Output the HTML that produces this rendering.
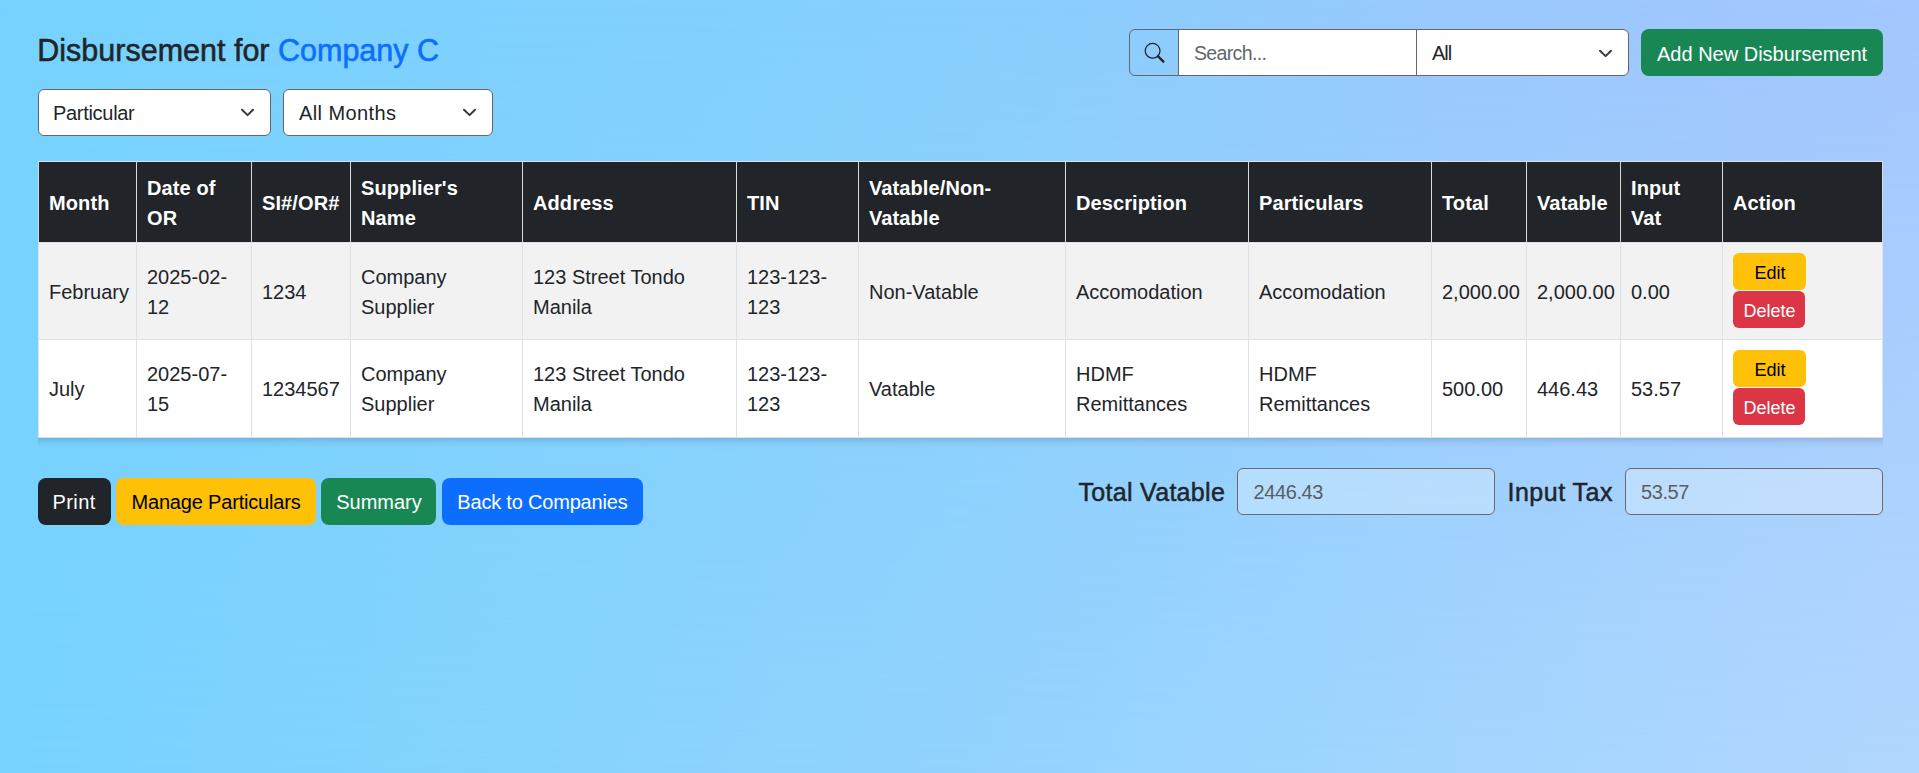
<!DOCTYPE html>
<html><head><meta charset="utf-8"><title>Disbursement</title><style>
html,body{margin:0;padding:0}
body{width:1919px;height:773px;position:relative;overflow:hidden;font-family:"Liberation Sans",sans-serif;color:#212529;
background:linear-gradient(to right,#76d3fe 0px,#87cffe 960px,#99c8fe 1450px,#a4c7fe 1919px);}
.bg2{position:absolute;left:0;top:0;width:1919px;height:773px;background:linear-gradient(to right,#77d2fe 0px,#92d3fe 960px,#b2d7fe 1919px);
-webkit-mask-image:linear-gradient(to bottom,transparent,#000);mask-image:linear-gradient(to bottom,transparent,#000)}
.t{position:absolute;white-space:nowrap}
.r{position:absolute;box-sizing:content-box}
</style></head>
<body><div class="bg2"></div>
<div class="t" style="left:37.3px;top:35.15px;font-size:30.5px;line-height:30.5px;-webkit-text-stroke:0.55px #212529;">Disbursement for <span style="color:#0d6efd;-webkit-text-stroke:0.55px #0d6efd">Company C</span></div>
<div class="r" style="left:38px;top:89px;width:231px;height:45px;background:#fff;border:1px solid #666;border-radius:6px"></div>
<div class="t" style="left:53px;top:103.1px;font-size:20px;line-height:20px;letter-spacing:-0.3px;">Particular</div>
<svg class="r" style="left:239.5px;top:107px" width="16" height="10" viewBox="0 0 16 10"><path d="M2.0 2.7 L7.6 8.1 L13.0 2.7" fill="none" stroke="#343a40" stroke-width="2" stroke-linecap="round" stroke-linejoin="round"/></svg>
<div class="r" style="left:283px;top:89px;width:208px;height:45px;background:#fff;border:1px solid #666;border-radius:6px"></div>
<div class="t" style="left:299px;top:103.1px;font-size:20px;line-height:20px;letter-spacing:0.4px;">All Months</div>
<svg class="r" style="left:461.7px;top:107px" width="16" height="10" viewBox="0 0 16 10"><path d="M2.0 2.7 L7.6 8.1 L13.0 2.7" fill="none" stroke="#343a40" stroke-width="2" stroke-linecap="round" stroke-linejoin="round"/></svg>
<div class="r" style="left:1129px;top:29px;width:498px;height:45px;border:1px solid #666;border-radius:6px;background:linear-gradient(to right,transparent 49px,#fff 49px)"></div>
<div class="r" style="left:1178px;top:30px;width:1px;height:45px;background:#666"></div>
<div class="r" style="left:1416px;top:30px;width:1px;height:45px;background:#666"></div>
<svg class="r" style="left:1142px;top:42px" width="24" height="24" viewBox="0 0 24 24"><circle cx="10.6" cy="8.8" r="7.4" fill="none" stroke="#212529" stroke-width="1.25"/><path d="M16.1 14.3 L21.4 19.6" stroke="#212529" stroke-width="2.4" stroke-linecap="round"/></svg>
<div class="t" style="left:1194px;top:44.15px;font-size:19.5px;line-height:19.5px;color:#5f666d;letter-spacing:-0.65px;">Search...</div>
<div class="t" style="left:1432px;top:42.6px;font-size:20px;line-height:20px;letter-spacing:-1px;">All</div>
<svg class="r" style="left:1597.5px;top:47.5px" width="16" height="10" viewBox="0 0 16 10"><path d="M2.0 2.7 L7.6 8.1 L13.0 2.7" fill="none" stroke="#343a40" stroke-width="2" stroke-linecap="round" stroke-linejoin="round"/></svg>
<div class="r" style="left:1641px;top:29px;width:242px;height:47px;background:#198754;border-radius:8px"></div>
<div class="t" style="left:1657px;top:43.9px;font-size:20px;line-height:20px;color:#fff;">Add New Disbursement</div>
<div class="r" style="left:38px;top:161px;width:1845px;height:277px;background:#dee2e6"></div>
<div class="r" style="left:38px;top:438px;width:1845px;height:10px;background:linear-gradient(to bottom,rgba(0,20,60,.14),rgba(0,20,60,.06) 40%,rgba(0,20,60,0))"></div>
<div class="r" style="left:38px;top:162px;width:1845px;height:80px;background:#212529"></div>
<div class="r" style="left:38px;top:242px;width:1845px;height:97px;background:#f2f2f2"></div>
<div class="r" style="left:38px;top:339px;width:1845px;height:98px;background:#fff"></div>
<div class="r" style="left:38px;top:162px;width:1px;height:80px;background:#d7dadd"></div>
<div class="r" style="left:38px;top:242px;width:1px;height:196px;background:#dee2e6"></div>
<div class="r" style="left:136px;top:162px;width:1px;height:80px;background:#d7dadd"></div>
<div class="r" style="left:136px;top:242px;width:1px;height:196px;background:#dee2e6"></div>
<div class="r" style="left:251px;top:162px;width:1px;height:80px;background:#d7dadd"></div>
<div class="r" style="left:251px;top:242px;width:1px;height:196px;background:#dee2e6"></div>
<div class="r" style="left:350px;top:162px;width:1px;height:80px;background:#d7dadd"></div>
<div class="r" style="left:350px;top:242px;width:1px;height:196px;background:#dee2e6"></div>
<div class="r" style="left:522px;top:162px;width:1px;height:80px;background:#d7dadd"></div>
<div class="r" style="left:522px;top:242px;width:1px;height:196px;background:#dee2e6"></div>
<div class="r" style="left:736px;top:162px;width:1px;height:80px;background:#d7dadd"></div>
<div class="r" style="left:736px;top:242px;width:1px;height:196px;background:#dee2e6"></div>
<div class="r" style="left:858px;top:162px;width:1px;height:80px;background:#d7dadd"></div>
<div class="r" style="left:858px;top:242px;width:1px;height:196px;background:#dee2e6"></div>
<div class="r" style="left:1065px;top:162px;width:1px;height:80px;background:#d7dadd"></div>
<div class="r" style="left:1065px;top:242px;width:1px;height:196px;background:#dee2e6"></div>
<div class="r" style="left:1248px;top:162px;width:1px;height:80px;background:#d7dadd"></div>
<div class="r" style="left:1248px;top:242px;width:1px;height:196px;background:#dee2e6"></div>
<div class="r" style="left:1431px;top:162px;width:1px;height:80px;background:#d7dadd"></div>
<div class="r" style="left:1431px;top:242px;width:1px;height:196px;background:#dee2e6"></div>
<div class="r" style="left:1526px;top:162px;width:1px;height:80px;background:#d7dadd"></div>
<div class="r" style="left:1526px;top:242px;width:1px;height:196px;background:#dee2e6"></div>
<div class="r" style="left:1620px;top:162px;width:1px;height:80px;background:#d7dadd"></div>
<div class="r" style="left:1620px;top:242px;width:1px;height:196px;background:#dee2e6"></div>
<div class="r" style="left:1722px;top:162px;width:1px;height:80px;background:#d7dadd"></div>
<div class="r" style="left:1722px;top:242px;width:1px;height:196px;background:#dee2e6"></div>
<div class="r" style="left:1882px;top:162px;width:1px;height:80px;background:#d7dadd"></div>
<div class="r" style="left:1882px;top:242px;width:1px;height:196px;background:#dee2e6"></div>
<div class="r" style="left:38px;top:161px;width:1845px;height:1px;background:#dee2e6"></div>
<div class="r" style="left:38px;top:242px;width:1845px;height:1px;background:#dee2e6"></div>
<div class="r" style="left:38px;top:339px;width:1845px;height:1px;background:#dee2e6"></div>
<div class="r" style="left:38px;top:437px;width:1845px;height:1px;background:#dee2e6"></div>
<div class="t" style="left:49px;top:193.3px;font-size:20px;line-height:20px;font-weight:700;color:#fff;letter-spacing:0.1px;">Month</div>
<div class="t" style="left:147px;top:178.3px;font-size:20px;line-height:20px;font-weight:700;color:#fff;letter-spacing:0.1px;">Date of</div>
<div class="t" style="left:147px;top:208.3px;font-size:20px;line-height:20px;font-weight:700;color:#fff;letter-spacing:0.1px;">OR</div>
<div class="t" style="left:262px;top:193.3px;font-size:20px;line-height:20px;font-weight:700;color:#fff;letter-spacing:0.1px;">SI#/OR#</div>
<div class="t" style="left:361px;top:178.3px;font-size:20px;line-height:20px;font-weight:700;color:#fff;letter-spacing:0.1px;">Supplier's</div>
<div class="t" style="left:361px;top:208.3px;font-size:20px;line-height:20px;font-weight:700;color:#fff;letter-spacing:0.1px;">Name</div>
<div class="t" style="left:533px;top:193.3px;font-size:20px;line-height:20px;font-weight:700;color:#fff;letter-spacing:0.1px;">Address</div>
<div class="t" style="left:747px;top:193.3px;font-size:20px;line-height:20px;font-weight:700;color:#fff;letter-spacing:0.1px;">TIN</div>
<div class="t" style="left:869px;top:178.3px;font-size:20px;line-height:20px;font-weight:700;color:#fff;letter-spacing:0.1px;">Vatable/Non-</div>
<div class="t" style="left:869px;top:208.3px;font-size:20px;line-height:20px;font-weight:700;color:#fff;letter-spacing:0.1px;">Vatable</div>
<div class="t" style="left:1076px;top:193.3px;font-size:20px;line-height:20px;font-weight:700;color:#fff;letter-spacing:0.1px;">Description</div>
<div class="t" style="left:1259px;top:193.3px;font-size:20px;line-height:20px;font-weight:700;color:#fff;letter-spacing:0.1px;">Particulars</div>
<div class="t" style="left:1442px;top:193.3px;font-size:20px;line-height:20px;font-weight:700;color:#fff;letter-spacing:0.1px;">Total</div>
<div class="t" style="left:1537px;top:193.3px;font-size:20px;line-height:20px;font-weight:700;color:#fff;letter-spacing:0.1px;">Vatable</div>
<div class="t" style="left:1631px;top:178.3px;font-size:20px;line-height:20px;font-weight:700;color:#fff;letter-spacing:0.1px;">Input</div>
<div class="t" style="left:1631px;top:208.3px;font-size:20px;line-height:20px;font-weight:700;color:#fff;letter-spacing:0.1px;">Vat</div>
<div class="t" style="left:1733px;top:193.3px;font-size:20px;line-height:20px;font-weight:700;color:#fff;letter-spacing:0.1px;">Action</div>
<div class="t" style="left:49px;top:282.2px;font-size:20px;line-height:20px;">February</div>
<div class="t" style="left:147px;top:267.1px;font-size:20px;line-height:20px;">2025-02-</div>
<div class="t" style="left:147px;top:297.1px;font-size:20px;line-height:20px;">12</div>
<div class="t" style="left:262px;top:282.2px;font-size:20px;line-height:20px;">1234</div>
<div class="t" style="left:361px;top:267.1px;font-size:20px;line-height:20px;">Company</div>
<div class="t" style="left:361px;top:297.1px;font-size:20px;line-height:20px;">Supplier</div>
<div class="t" style="left:533px;top:267.1px;font-size:20px;line-height:20px;">123 Street Tondo</div>
<div class="t" style="left:533px;top:297.1px;font-size:20px;line-height:20px;">Manila</div>
<div class="t" style="left:747px;top:267.1px;font-size:20px;line-height:20px;">123-123-</div>
<div class="t" style="left:747px;top:297.1px;font-size:20px;line-height:20px;">123</div>
<div class="t" style="left:869px;top:282.2px;font-size:20px;line-height:20px;">Non-Vatable</div>
<div class="t" style="left:1076px;top:282.2px;font-size:20px;line-height:20px;">Accomodation</div>
<div class="t" style="left:1259px;top:282.2px;font-size:20px;line-height:20px;">Accomodation</div>
<div class="t" style="left:1442px;top:282.2px;font-size:20px;line-height:20px;">2,000.00</div>
<div class="t" style="left:1537px;top:282.2px;font-size:20px;line-height:20px;">2,000.00</div>
<div class="t" style="left:1631px;top:282.2px;font-size:20px;line-height:20px;">0.00</div>
<div class="r" style="left:1733px;top:253px;width:73px;height:37px;background:#ffc107;border-radius:6px"></div>
<div class="t" style="left:1754.5px;top:264.2px;font-size:18px;line-height:18px;color:#000;">Edit</div>
<div class="r" style="left:1733px;top:291px;width:72px;height:37px;background:#dc3545;border-radius:6px"></div>
<div class="t" style="left:1743.5px;top:301.5px;font-size:18px;line-height:18px;color:#fff;">Delete</div>
<div class="t" style="left:49px;top:379.2px;font-size:20px;line-height:20px;">July</div>
<div class="t" style="left:147px;top:364.1px;font-size:20px;line-height:20px;">2025-07-</div>
<div class="t" style="left:147px;top:394.1px;font-size:20px;line-height:20px;">15</div>
<div class="t" style="left:262px;top:379.2px;font-size:20px;line-height:20px;">1234567</div>
<div class="t" style="left:361px;top:364.1px;font-size:20px;line-height:20px;">Company</div>
<div class="t" style="left:361px;top:394.1px;font-size:20px;line-height:20px;">Supplier</div>
<div class="t" style="left:533px;top:364.1px;font-size:20px;line-height:20px;">123 Street Tondo</div>
<div class="t" style="left:533px;top:394.1px;font-size:20px;line-height:20px;">Manila</div>
<div class="t" style="left:747px;top:364.1px;font-size:20px;line-height:20px;">123-123-</div>
<div class="t" style="left:747px;top:394.1px;font-size:20px;line-height:20px;">123</div>
<div class="t" style="left:869px;top:379.2px;font-size:20px;line-height:20px;">Vatable</div>
<div class="t" style="left:1076px;top:364.1px;font-size:20px;line-height:20px;">HDMF</div>
<div class="t" style="left:1076px;top:394.1px;font-size:20px;line-height:20px;">Remittances</div>
<div class="t" style="left:1259px;top:364.1px;font-size:20px;line-height:20px;">HDMF</div>
<div class="t" style="left:1259px;top:394.1px;font-size:20px;line-height:20px;">Remittances</div>
<div class="t" style="left:1442px;top:379.2px;font-size:20px;line-height:20px;">500.00</div>
<div class="t" style="left:1537px;top:379.2px;font-size:20px;line-height:20px;">446.43</div>
<div class="t" style="left:1631px;top:379.2px;font-size:20px;line-height:20px;">53.57</div>
<div class="r" style="left:1733px;top:350px;width:73px;height:37px;background:#ffc107;border-radius:6px"></div>
<div class="t" style="left:1754.5px;top:361.2px;font-size:18px;line-height:18px;color:#000;">Edit</div>
<div class="r" style="left:1733px;top:388px;width:72px;height:37px;background:#dc3545;border-radius:6px"></div>
<div class="t" style="left:1743.5px;top:398.5px;font-size:18px;line-height:18px;color:#fff;">Delete</div>
<div class="r" style="left:38px;top:478px;width:73px;height:47px;background:#212529;border-radius:8px"></div>
<div class="t" style="left:52.5px;top:492.1px;font-size:20px;line-height:20px;color:#fff;letter-spacing:0.4px;">Print</div>
<div class="r" style="left:116px;top:478px;width:200px;height:47px;background:#ffc107;border-radius:8px"></div>
<div class="t" style="left:131.5px;top:492.1px;font-size:20px;line-height:20px;color:#000;letter-spacing:-0.18px;">Manage Particulars</div>
<div class="r" style="left:321px;top:478px;width:115px;height:47px;background:#198754;border-radius:8px"></div>
<div class="t" style="left:336.2px;top:492.1px;font-size:20px;line-height:20px;color:#fff;">Summary</div>
<div class="r" style="left:442px;top:478px;width:201px;height:47px;background:#0d6efd;border-radius:8px"></div>
<div class="t" style="left:457.3px;top:492.1px;font-size:20px;line-height:20px;color:#fff;letter-spacing:-0.19px;">Back to Companies</div>
<div class="t" style="left:1078.5px;top:480px;font-size:25px;line-height:25px;letter-spacing:0.3px;-webkit-text-stroke:0.5px #212529;">Total Vatable</div>
<div class="r" style="left:1237px;top:468px;width:256px;height:45px;border:1px solid #6a6a6a;border-radius:6px;background:rgba(255,255,255,.28)"></div>
<div class="t" style="left:1253.5px;top:481.8px;font-size:20px;line-height:20px;color:#595e63;letter-spacing:-0.4px;">2446.43</div>
<div class="t" style="left:1507.5px;top:480px;font-size:25px;line-height:25px;letter-spacing:0.5px;-webkit-text-stroke:0.5px #212529;">Input Tax</div>
<div class="r" style="left:1625px;top:468px;width:256px;height:45px;border:1px solid #6a6a6a;border-radius:6px;background:rgba(255,255,255,.28)"></div>
<div class="t" style="left:1641px;top:481.8px;font-size:20px;line-height:20px;color:#595e63;letter-spacing:-0.4px;">53.57</div>
</body></html>
